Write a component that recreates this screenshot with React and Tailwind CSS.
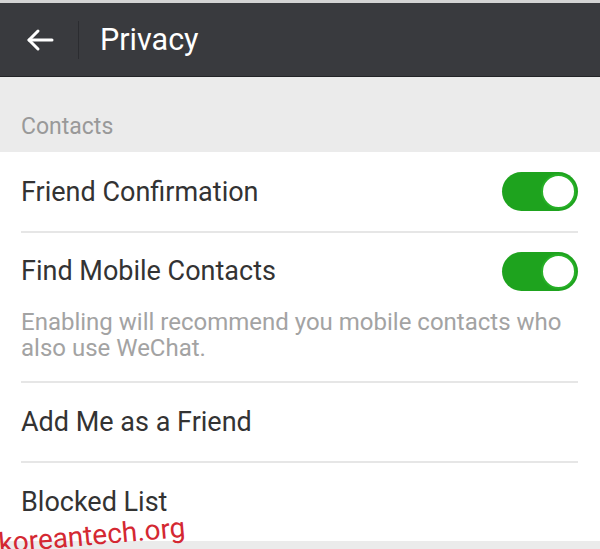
export default function App() {
  const rowText = "text-[27px] leading-[32px] text-[#333333]";

  const Toggle = () => (
    <div className="w-[76px] h-[39px] rounded-full bg-[#1ea31e] flex items-center justify-end pr-[2px] shrink-0">
      <div className="w-[35px] h-[35px] rounded-full bg-white border-2 border-[#27b027]" />
    </div>
  );

  const Divider = () => <div className="ml-[21px] mr-[22px] h-[2px] bg-[#e6e6e6]" />;

  return (
    <div
      className="w-[600px] h-[549px] overflow-hidden relative bg-[#ebebeb] flex flex-col"
      style={{ fontFamily: "Roboto, 'Noto Sans', sans-serif" }}
    >
      {/* top strip */}
      <div className="h-[3px] bg-[#d4d4d4]" />

      {/* header */}
      <div className="h-[74px] bg-[#393a3e] border-b border-[#232427] flex items-center">
        <div className="w-[78px] flex justify-center pl-[1px]">
          <svg width="30" height="24" viewBox="0 0 30 24" fill="none" stroke="white" strokeWidth="3" strokeLinecap="round" strokeLinejoin="round">
            <path d="M27 12H4" />
            <path d="M13 3L4 12L13 21" />
          </svg>
        </div>
        <div className="w-px h-[38px] bg-[#2b2c30]" />
        <span className="ml-[21px] text-[30.5px] leading-[34px] text-white">Privacy</span>
      </div>

      {/* section header */}
      <div className="h-[75px] pt-[36px] px-[21px]">
        <span className="text-[23px] leading-[28px] text-[#999999]">Contacts</span>
      </div>

      {/* list */}
      <div className="bg-white">
        <div className="h-[79px] flex items-center justify-between pl-[21px] pr-[22px]">
          <span className={rowText}>Friend Confirmation</span>
          <Toggle />
        </div>
        <Divider />

        <div className="pt-[22px] pb-[20px]">
          <div className="flex items-center justify-between pl-[21px] pr-[22px] h-[32px]">
            <span className={rowText}>Find Mobile Contacts</span>
            <Toggle />
          </div>
          <p className="mt-[22px] pl-[21px] pr-[22px] text-[24px] leading-[26px] text-[#a3a3a3]">
            Enabling will recommend you mobile contacts who also use WeChat.
          </p>
        </div>
        <Divider />

        <div className="h-[78px] flex items-center pl-[21px]">
          <span className={rowText}>Add Me as a Friend</span>
        </div>
        <Divider />

        <div className="h-[78px] flex items-center pl-[21px]">
          <span className={rowText}>Blocked List</span>
        </div>
      </div>

      {/* watermark */}
      <div className="absolute left-0 bottom-[-11px] origin-bottom-left -rotate-[5deg] text-[28px] leading-[32px] text-[#d42832]">
        koreantech.org
      </div>
    </div>
  );
}
